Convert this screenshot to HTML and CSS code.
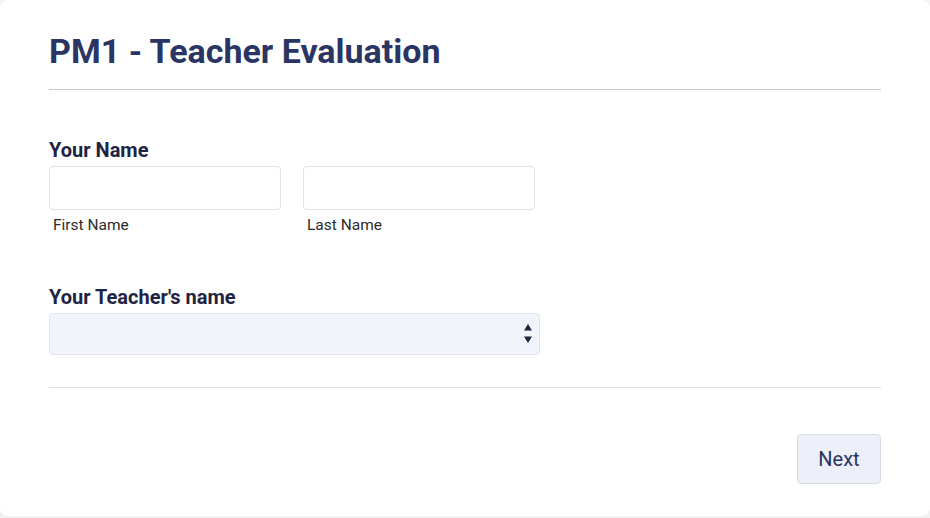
FILE: index.html
```html
<!DOCTYPE html>
<html lang="en">

<head>
  <meta charset="UTF-8">
  <meta name="viewport" content="width=device-width, initial-scale=1.0">
  <title>PM1 - Teacher Evaluation</title>
  <link rel="stylesheet" href="styles.css">
</head>

<body>
  <div class="form-card">
    <h1 class="form-title">PM1 - Teacher Evaluation</h1>
    <form id="eval-form">
      <div class="field">
        <label class="field-label">Your Name</label>
        <div class="name-row">
          <div class="name-part">
            <input type="text" name="first">
            <span class="sub-label">First Name</span>
          </div>
          <div class="name-part">
            <input type="text" name="last">
            <span class="sub-label">Last Name</span>
          </div>
        </div>
      </div>
      <div class="field">
        <label class="field-label">Your Teacher's name</label>
        <div class="select-box">
          <select name="teacher">
            <option></option>
          </select>
          <span class="arrows">
            <svg width="8" height="19" viewBox="0 0 8 19">
              <path d="M4 0 L8 6.5 L0 6.5 Z" fill="#1f2444" />
              <path d="M4 19 L8 12.5 L0 12.5 Z" fill="#1f2444" />
            </svg>
          </span>
        </div>
      </div>
      <div class="form-footer">
        <button type="submit">Next</button>
      </div>
    </form>
  </div>
</body>

</html>
```

FILE: styles.css
```css
body {
  margin: 0;
  background-color: #f2f2f2;
  font-family: Roboto, "Liberation Sans", sans-serif;
}

.form-card {
  width: 930px;
  height: 516px;
  box-sizing: border-box;
  background-color: #fff;
  border-radius: 8px;
  padding: 29px 49px 0 49px;
}

.form-title {
  margin: 0;
  font-size: 34px;
  font-weight: 700;
  color: #2a3563;
  line-height: 44px;
  padding-bottom: 16px;
  border-bottom: 1px solid #c9c9cd;
}

.field {
  display: flex;
  flex-direction: column;
}

.field:first-child {
  margin-top: 48px;
}

.field-label {
  font-size: 20px;
  font-weight: 700;
  color: #1f2444;
  line-height: 24px;
  margin-bottom: 4px;
}

.name-row {
  display: flex;
  gap: 22px;
  margin-bottom: 51px;
}

.name-part {
  display: flex;
  flex-direction: column;
  width: 232px;
}

input {
  height: 44px;
  box-sizing: border-box;
  border: 1px solid #dde1e9;
  border-radius: 4px;
  outline: none;
  padding: 10px;
}

.sub-label {
  font-size: 15.5px;
  color: #2b2b2b;
  margin-top: 6px;
  margin-left: 4px;
  line-height: 18px;
}

.select-box {
  position: relative;
  width: 491px;
  line-height: 0;
}

select {
  width: 100%;
  height: 42px;
  appearance: none;
  background-color: #f1f4fa;
  border: 1px solid #dfe4ef;
  border-radius: 4px;
  outline: none;
}

.arrows {
  position: absolute;
  right: 8px;
  top: 11px;
  line-height: 0;
}

.form-footer {
  display: flex;
  justify-content: flex-end;
  margin-top: 32px;
  border-top: 1px solid #e2e2e4;
  padding-top: 46px;
}

button[type="submit"] {
  width: 84px;
  height: 50px;
  background-color: #edf0f8;
  border: 1px solid #d7dce8;
  border-radius: 4px;
  font-family: Roboto, "Liberation Sans", sans-serif;
  font-size: 20px;
  color: #2a3563;
  cursor: pointer;
}
```
